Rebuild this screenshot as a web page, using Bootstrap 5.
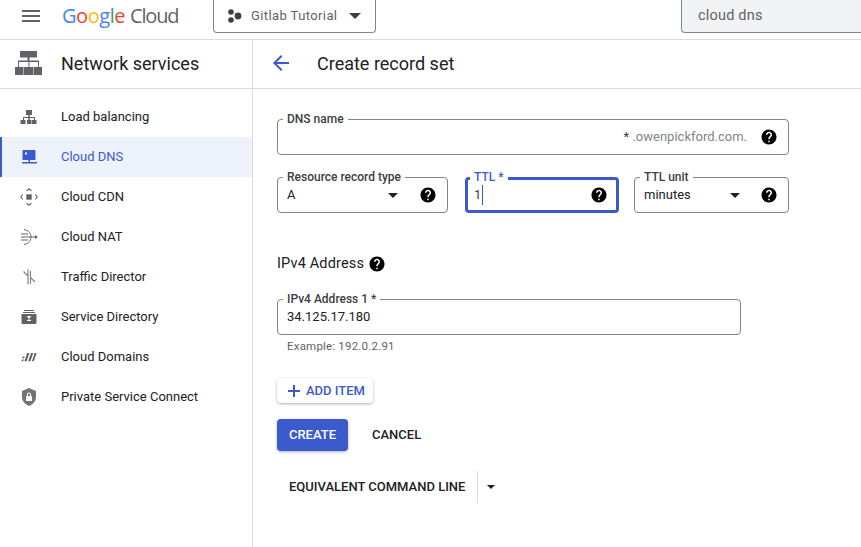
<!doctype html>
<html lang="en"><head><meta charset="utf-8"><title>Create record set</title>
<link href="https://cdn.jsdelivr.net/npm/bootstrap@5.3.0/dist/css/bootstrap.min.css" rel="stylesheet">
<style>
html,body{height:547px;overflow:hidden}
body{font-family:Roboto,sans-serif;font-size:13px;color:#202124;background:#fff}
.shell{height:547px}
.topbar{height:40px;border-bottom:1px solid #dadce0;flex:none}
.burger{width:18px;margin-left:22px;margin-top:-4px}
.burger i{display:block;height:2px;background:#5f6368;margin-bottom:3px}
.brand{margin-left:22px;margin-top:-7px;font-size:20px;letter-spacing:-.45px;line-height:30px;width:146px;font-family:"Open Sans",sans-serif;white-space:nowrap}
.brand b{font-weight:400}
.brand .cl{color:#5f6368;margin-left:5px;letter-spacing:-1.2px}
.proj{margin-left:5px;width:163px;height:34px;margin-top:-1px;align-self:flex-start;border:1px solid #80868b;border-top:0;border-radius:0 0 4px 4px;padding-left:13px;color:#5f6368;font-size:13px;letter-spacing:.4px}
.proj svg{flex:none}
.searchbox{margin-left:auto;width:180px;height:34px;align-self:flex-start;background:#f1f3f4;border:1px solid #80868b;border-top:0;border-right:0;border-bottom-left-radius:4px;padding-left:16px;color:#5f6368;font-size:14.5px;letter-spacing:.2px;margin-top:-1px}
.side{width:253px;border-right:1px solid #dadce0;flex:none}
.ttlrow{height:49px;border-bottom:1px solid #dadce0;padding-bottom:2px}
.side .ttlrow{padding-left:15px;font-size:18px;color:#202124}
.side .ttlrow svg{margin-right:19px}
.navlist{padding-top:8px}
.navitem{height:40px;padding-left:20px;color:#202124;text-decoration:none}
.navitem svg{margin-right:23px;flex:none}
.navitem.sel{background:#edf2fc;color:#3b5bcd;box-shadow:inset 2px 0 0 #3b5bcd}
.pane .ttlrow{padding-left:16px;font-size:18px}
.pane .ttlrow svg{margin-right:24px}
.formarea{padding:30px 0 0 24px;width:536px}
.fld{position:relative;border:1px solid #80868b;border-radius:4px;height:36px;padding:0 9px;font-size:13px;color:#202124}
.fld .lbl{position:absolute;left:5px;top:-8px;background:#fff;padding:0 4px;font-size:12px;font-weight:500;line-height:14px;color:#3c4043}
.fld.focus{border:3px solid #3b5bcd;padding:0 6px}
.fld.focus .lbl{color:#3b5bcd;top:-10px;left:2px}
.caretdn{width:0;height:0;border-left:5px solid transparent;border-right:5px solid transparent;border-top:5px solid #202124;flex:none}
.w1{width:171px}.w2{width:154px;margin-left:17px}.w3{width:155px;margin-left:15px}
.domainsuffix{margin-left:auto;color:#80868b}
.domainsuffix u{text-decoration:none;color:#3c4043}
.typed{border-right:1px solid #3b5bcd;padding-right:1px;color:#3c4043}
.sechead{margin-top:41px;font-size:14.5px;line-height:20px;height:20px;letter-spacing:.15px;color:#202124}
.w4{width:464px;margin-top:25px}
.hint{font-size:11.5px;letter-spacing:.2px;color:#5f6368;padding-left:10px;margin-top:4px;line-height:14px}
.addbtn{margin-top:25px;width:96px;height:25px;padding:0 0 0 11px;border:0;border-radius:4px;background:#fff;color:#3b5bcd;font-size:13px;font-weight:500;box-shadow:0 1px 3px rgba(60,64,67,.4)}
.addbtn svg{margin-right:6px}
.createbtn{width:71px;height:32px;padding:0;border:0;border-radius:4px;background:#3b5bcd;color:#fff;font-size:13px;font-weight:500;box-shadow:0 1px 3px rgba(60,64,67,.4)}
.cancelbtn{padding:0;border:0;margin-left:24px;color:#202124;font-size:13px;font-weight:500}
.actrow{margin-top:16px}
.cmdrow{margin-top:20px;height:32px;padding-left:12px;font-size:13px;font-weight:500}
.cmdrow .sep{width:1px;height:32px;background:#dadce0;margin:0 9px 0 12px}
.cmdrow .caretdn{border-left-width:4px;border-right-width:4px;border-top-width:4px;margin-left:0}
</style></head>
<body>
<div class="shell d-flex flex-column">
<header class="topbar d-flex align-items-center">
  <div class="burger"><i></i><i></i><i></i></div>
  <div class="brand"><b style="color:#4285f4">G</b><b style="color:#ea4335">o</b><b style="color:#fbbc05">o</b><b style="color:#4285f4">g</b><b style="color:#34a853">l</b><b style="color:#ea4335">e</b><span class="cl">Cloud</span></div>
  <div class="proj d-flex align-items-center">
    <svg width="16" height="14" viewBox="0 0 16 14" class="me-2"><g fill="#3c4043"><circle cx="4" cy="3" r="2.800"/><circle cx="4" cy="11" r="2.800"/><circle cx="11" cy="7" r="3.400"/></g></svg>
    <span>Gitlab Tutorial</span>
    <span class="caretdn ms-auto" style="margin-right:14px;border-left-width:6px;border-right-width:6px;border-top-width:6px;border-top-color:#3c4043"></span>
  </div>
  <div class="searchbox d-flex align-items-center">cloud dns</div>
</header>
<div class="d-flex flex-grow-1">
<aside class="side">
  <div class="ttlrow d-flex align-items-center">
    <svg width="27" height="24" viewBox="0 0 27 24"><path fill="#5f6368" d="M5 0h17v6.500h-7.500v3H24V16h3v8h-8.500v-8H23v-5h-8.500v5H18v8H9v-8h4.500v-5H4v5h4.500v8H0v-8h3V9.500h9.500v-3H5z"/></svg>
    <span>Network services</span>
  </div>
  <nav class="navlist">
    <a class="navitem d-flex align-items-center" href="#"><svg width="18" height="18" viewBox="0 0 18 18"><path fill="#5f6368" d="M6 2h6v5H9.800v2H15v3h1.500v4h-5v-4H14v-2H9.800v2H11v4H7v-4h1.200v-2H4v2h1.500v4h-5v-4H3V9h5.200V7H6z"/></svg>Load balancing</a>
    <a class="navitem sel d-flex align-items-center" href="#"><svg width="18" height="18" viewBox="0 0 18 18"><path fill="#3b5bcd" d="M3.500 2h11a1 1 0 0 1 1 1v8a1 1 0 0 1-1 1H10v2h7v1.500H2V14h6.500v-2h-5a1 1 0 0 1-1-1V3a1 1 0 0 1 1-1zm1.500 2.500v2h2v-2z"/></svg>Cloud DNS</a>
    <a class="navitem d-flex align-items-center" href="#"><svg width="18" height="18" viewBox="0 0 18 18"><path fill="#5f6368" d="M6.300 6.300h5.400v5.400H6.300z"/><path fill="none" stroke="#5f6368" stroke-width="1.100" d="M6.500 2.700 9 .8l2.500 1.900M6.500 15.300 9 17.200l2.500-1.900M2.700 6.500.8 9l1.900 2.500M15.300 6.500 17.200 9l-1.900 2.500"/></svg>Cloud CDN</a>
    <a class="navitem d-flex align-items-center" href="#"><svg width="18" height="18" viewBox="0 0 18 18"><g fill="none" stroke="#5f6368" stroke-width="1"><path d="M4 1.500c5 1 7 4 7 7.500s-2 6.500-7 7.500M1 6h7M1 9h10M1 12h7"/></g><path fill="#5f6368" d="M11 8.500h4V7l3 2-3 2V9.500h-4z"/></svg>Cloud NAT</a>
    <a class="navitem d-flex align-items-center" href="#"><svg width="18" height="18" viewBox="0 0 18 18"><g fill="none" stroke="#80868b" stroke-width="1.200"><path d="M8 1.500v15M10.500 3v13M3.500 3.500 8 8M15 14l-4.500-4.500"/></g></svg>Traffic Director</a>
    <a class="navitem d-flex align-items-center" href="#"><svg width="18" height="18" viewBox="0 0 18 18"><path fill="#5f6368" d="M4 2h10v1H4zM3 4h12v1H3zM2 6h14a.5.500 0 0 1 .5.500V15a1 1 0 0 1-1 1h-13a1 1 0 0 1-1-1V6.500A.5.500 0 0 1 2 6z"/><path fill="#fff" d="M6.500 8h5L9.500 10v2H11v1H7v-1h1.500v-2z"/></svg>Service Directory</a>
    <a class="navitem d-flex align-items-center" href="#"><svg width="18" height="18" viewBox="0 0 18 18"><path fill="#5f6368" d="M2 11.500h1.800l-.6 1.700H1.400zM2.800 8.500h1.800L4 10.300H2.200zM7.200 5h2.200l-2.800 8.200H4.400zM11 5h2.200l-2.800 8.200H8.200zM14.600 5h2l-2.800 8.200H12z"/></svg>Cloud Domains</a>
    <a class="navitem d-flex align-items-center" href="#"><svg width="18" height="18" viewBox="0 0 18 18"><path fill="#70757a" d="M9 0 16 3v6c0 4-3 7.500-7 9-4-1.500-7-5-7-9V3z"/><path fill="#fff" d="M6 8h6v5H6zM7 8V6.500a2 2 0 0 1 4 0V8h-1V6.500a1 1 0 0 0-2 0V8z"/></svg>Private Service Connect</a>
  </nav>
</aside>
<main class="pane flex-grow-1">
  <div class="ttlrow d-flex align-items-center">
    <svg width="24" height="24" viewBox="0 0 24 24"><path fill="#3b5bcd" d="M20 11H7.830l5.590-5.590L12 4l-8 8 8 8 1.410-1.410L7.830 13H20v-2z"/></svg>
    <span>Create record set</span>
  </div>
  <div class="formarea">
    <div class="fld d-flex align-items-center">
      <span class="lbl">DNS name</span>
      <span class="domainsuffix"><u>*</u> .owenpickford.com.</span>
      <svg style="margin-left:13px;margin-right:1px" width="18" height="18" viewBox="0 0 24 24"><use href="#qm"/></svg>
    </div>
    <div class="d-flex" style="margin-top:22px">
      <div class="fld w1 d-flex align-items-center"><span class="lbl">Resource record type</span><span>A</span><span class="caretdn" style="margin-left:auto"></span><svg style="margin-left:21px;margin-right:1px" width="18" height="18" viewBox="0 0 24 24"><use href="#qm"/></svg></div>
      <div class="fld focus w2 d-flex align-items-center"><span class="lbl">TTL *</span><span class="typed">1</span><svg style="margin-left:auto;margin-right:2px" width="18" height="18" viewBox="0 0 24 24"><use href="#qm"/></svg></div>
      <div class="fld w3 d-flex align-items-center"><span class="lbl">TTL unit</span><span>minutes</span><span class="caretdn" style="margin-left:auto"></span><svg style="margin-left:20px;margin-right:1px" width="18" height="18" viewBox="0 0 24 24"><use href="#qm"/></svg></div>
    </div>
    <div class="sechead d-flex align-items-center">IPv4 Address<svg class="ms-1" width="18" height="18" viewBox="0 0 24 24"><use href="#qm"/></svg></div>
    <div class="fld w4 d-flex align-items-center"><span class="lbl">IPv4 Address 1 *</span><span>34.125.17.180</span></div>
    <div class="hint">Example: 192.0.2.91</div>
    <button class="btn addbtn d-flex align-items-center" type="button"><svg width="12" height="12" viewBox="0 0 12 12"><path fill="#3b5bcd" d="M5 0h2v5h5v2H7v5H5V7H0V5h5z"/></svg>ADD ITEM</button>
    <div class="actrow d-flex align-items-center"><button class="btn createbtn" type="button">CREATE</button><button class="btn cancelbtn" type="button">CANCEL</button></div>
    <div class="cmdrow d-flex align-items-center"><span>EQUIVALENT COMMAND LINE</span><span class="sep"></span><span class="caretdn"></span></div>
  </div>
</main>
</div>
</div>
<svg width="0" height="0" class="position-absolute"><defs><path id="qm" fill="#000" d="M12 2C6.480 2 2 6.480 2 12s4.480 10 10 10 10-4.480 10-10S17.520 2 12 2zm1 17h-2v-2h2v2zm2.070-7.750l-.9.920C13.450 12.900 13 13.500 13 15h-2v-.5c0-1.100.45-2.100 1.170-2.830l1.240-1.260c.37-.36.59-.86.59-1.410 0-1.100-.9-2-2-2s-2 .9-2 2H8c0-2.210 1.790-4 4-4s4 1.790 4 4c0 .88-.36 1.680-.93 2.250z"/></defs></svg>
</body></html>
